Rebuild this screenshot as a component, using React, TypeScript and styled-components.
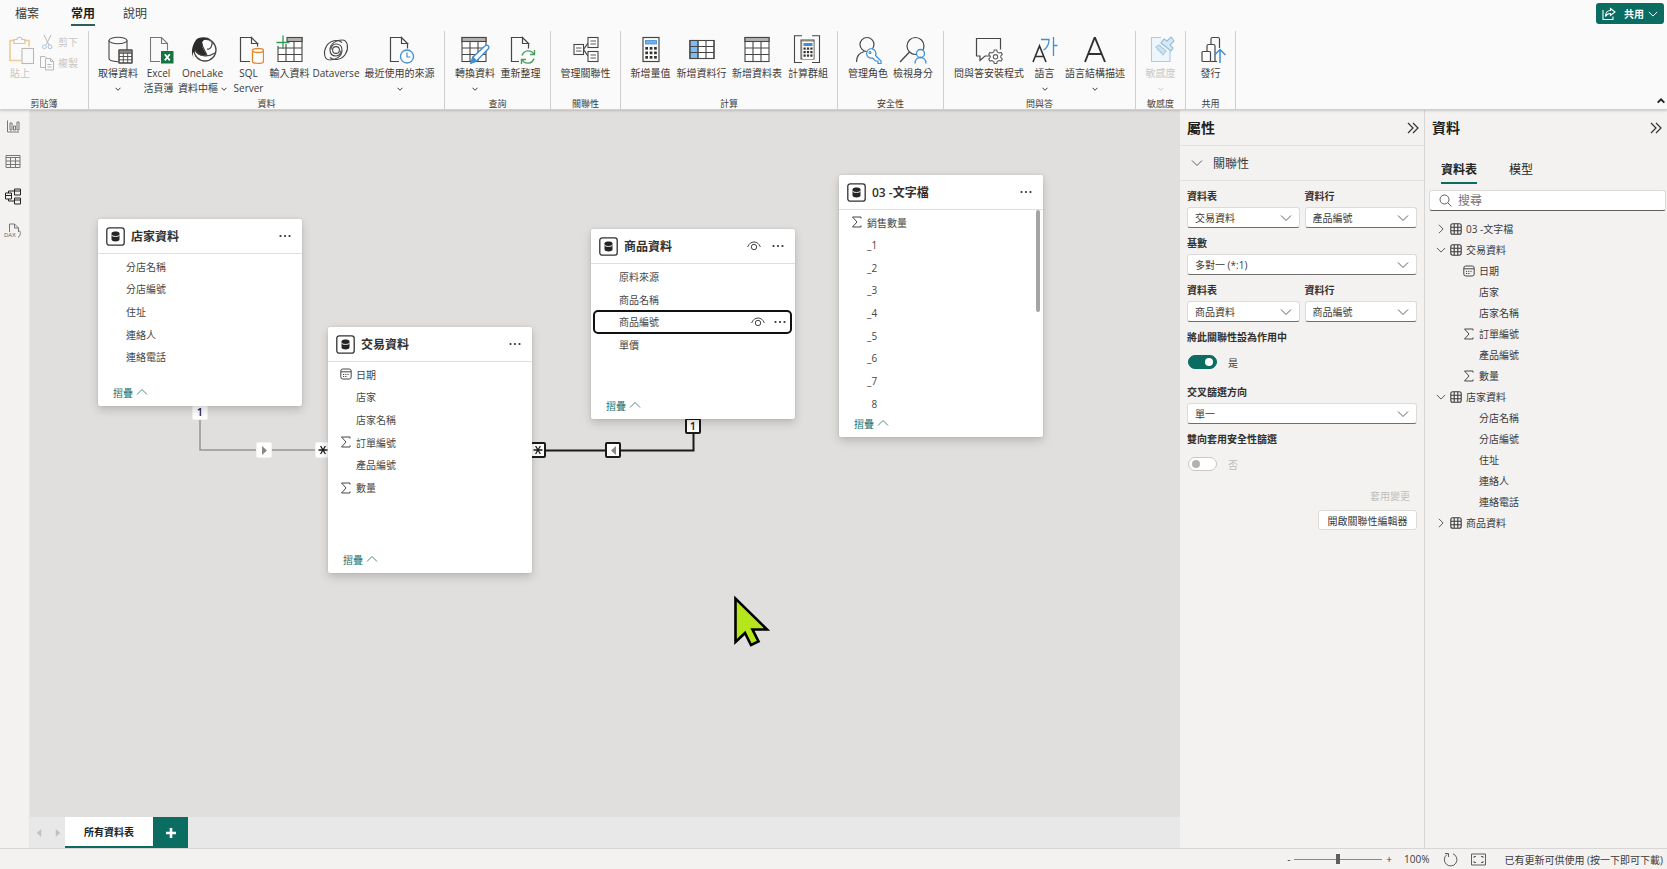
import React from "react";
import styled, { createGlobalStyle, css } from "styled-components";

const fontStack = `"Open Sans", "Noto Sans CJK TC", sans-serif`;
const teal = "#0b6c61";
const ink = "#3b3a39";
const blue = "#3f8fd2";

const GlobalStyle = createGlobalStyle`
  * { box-sizing: border-box; }
  body {
    margin: 0;
    font-family: ${fontStack};
    font-size: 10px;
    color: ${ink};
    background: #f3f2f1;
    overflow: hidden;
  }
  button, input, select { font: inherit; color: inherit; }
  button { border: 0; background: none; padding: 0; cursor: pointer; }
  ul { list-style: none; margin: 0; padding: 0; }
  h2, h3 { margin: 0; }
  svg { display: block; flex: none; }
`;

/* ---------- page frame ---------- */

const Page = styled.div`
  display: flex;
  flex-direction: column;
  height: 100vh;
`;

const Workspace = styled.div`
  flex: 1;
  display: flex;
  min-height: 0;
`;

/* ---------- ribbon ---------- */

const Ribbon = styled.header`
  background: #fafafa;
  border-bottom: 1px solid #d2d0ce;
  box-shadow: 0 1px 2px rgba(0, 0, 0, 0.16);
  z-index: 2;
`;

const TabBar = styled.nav`
  display: flex;
  height: 31px;
  padding-right: 3px;
`;

const RibbonTab = styled.button<{ $active?: boolean; $file?: boolean }>`
  height: 26px;
  padding: ${(p) => (p.$file ? "0 18px 0 15px" : "0 14px")};
  font-size: 12px;
  font-weight: ${(p) => (p.$active ? 700 : 400)};
  color: ${(p) => (p.$active ? "#201f1e" : ink)};

  span {
    display: block;
    height: 26px;
    line-height: 28px;
    border-bottom: 2px solid ${(p) => (p.$active ? "#2b5f5a" : "transparent")};
  }
`;

const ShareButton = styled.button`
  display: flex;
  align-items: center;
  gap: 8px;
  height: 21px;
  margin: 3px 0 0 auto;
  padding: 0 6px;
  border-radius: 3px;
  background: ${teal};
  color: #fff;
  font-weight: 600;

  svg:last-child { margin-left: -4px; }
`;

const GroupBar = styled.div`
  display: flex;
  height: 78px;
`;

const Group = styled.section<{ $w: number }>`
  display: flex;
  flex-direction: column;
  flex: none;
  width: ${(p) => p.$w}px;
  border-right: 1px solid #d2d0ce;
`;

const GroupBody = styled.div`
  display: flex;
  justify-content: center;
  flex: 1;
`;

const GroupName = styled.div`
  height: 12px;
  line-height: 14px;
  font-size: 9px;
  text-align: center;
`;

const BigButton = styled.button<{ $w: number }>`
  display: flex;
  flex-direction: column;
  align-items: center;
  width: ${(p) => p.$w}px;
  padding-top: 4px;
  line-height: 15px;
  white-space: nowrap;

  > svg { margin-bottom: 1px; }
  &:disabled { color: #c8c6c4; }
`;

const ButtonLine = styled.span`
  display: flex;
  align-items: center;
  justify-content: center;
  gap: 3px;
  height: 15px;
`;

const SmallColumn = styled.div`
  display: flex;
  flex-direction: column;
  padding: 0 6px 0 3px;
`;

const SmallButton = styled.button`
  display: flex;
  align-items: center;
  gap: 3px;
  height: 21px;

  &:disabled { color: #c8c6c4; }
`;

const CollapseRibbon = styled.button`
  align-self: flex-end;
  margin: 0 2px 4px auto;
`;

/* ---------- left rail ---------- */

const Rail = styled.nav`
  display: flex;
  flex-direction: column;
  align-items: center;
  gap: 17px;
  width: 30px;
  padding: 7px 4px 0 0;
  border-right: 1px solid #e6e5e4;
`;

/* ---------- model canvas ---------- */

const CanvasColumn = styled.main`
  flex: 1;
  display: flex;
  flex-direction: column;
  min-width: 0;
`;

const Canvas = styled.div`
  position: relative;
  flex: 1;
  background: #e0dfde;
  overflow: hidden;
`;

const TableNode = styled.article<{ $x: number; $y: number; $h: number }>`
  position: absolute;
  left: ${(p) => p.$x}px;
  top: ${(p) => p.$y}px;
  display: flex;
  flex-direction: column;
  width: 204px;
  height: ${(p) => p.$h}px;
  background: #fff;
  border-radius: 2px;
  box-shadow: 0 4px 10px rgba(0, 0, 0, 0.17), 0 0 3px rgba(0, 0, 0, 0.1);
`;

const NodeHeader = styled.header`
  display: flex;
  align-items: center;
  gap: 6px;
  height: 35px;
  padding: 0 11px 0 8px;
  border-bottom: 1px solid #e1dfdd;
`;

const NodeTitle = styled.h3`
  flex: 1;
  padding-top: 1px;
  font-size: 12px;
  font-weight: 600;
  line-height: 18px;
  color: #323130;
`;

const IconButton = styled.button`
  display: flex;
  margin-left: 5px;
`;

const FieldClip = styled.div<{ $h?: number }>`
  display: flex;
  justify-content: space-between;
  ${(p) => p.$h && css`height: ${p.$h}px;`}
  overflow: ${(p) => (p.$h ? "hidden" : "visible")};
`;

const FieldList = styled.ul<{ $h: number }>`
  flex: 1;
  display: grid;
  grid-auto-rows: 1fr;
  height: ${(p) => p.$h}px;
  margin: 1px 4px 0 3px;
`;

const FieldRow = styled.li<{ $selected?: boolean }>`
  display: flex;
  align-items: center;
  gap: 4px;
  padding: 0 5px 0 9px;
  color: #484644;
  border-radius: 4px;
  ${(p) => p.$selected && css`outline: 2px solid #111; outline-offset: -1px;`}
`;

const FieldName = styled.span`
  flex: 1;
`;

const IconSlot = styled.span`
  width: 12px;
`;

const ScrollThumb = styled.div`
  width: 4px;
  height: 102px;
  margin-right: 3px;
  border-radius: 2px;
  background: #a6a5a4;
`;

const CollapseButton = styled.button`
  display: flex;
  align-items: center;
  gap: 3px;
  height: 28px;
  margin-top: auto;
  padding-left: 15px;
  color: #22706c;
`;

const Wires = styled.svg`
  position: absolute;
  left: 0;
  top: 0;
`;

const Badge = styled.span<{ $x: number; $y: number; $active?: boolean }>`
  position: absolute;
  left: ${(p) => p.$x}px;
  top: ${(p) => p.$y}px;
  display: flex;
  align-items: center;
  justify-content: center;
  width: 16px;
  height: 16px;
  background: #fff;
  border: ${(p) => (p.$active ? "2px solid #1b1a19" : "1px solid #f3f2f1")};
  border-radius: 2px;
  font-size: 11px;
  font-weight: 600;
  line-height: 12px;
  color: #252423;
`;

const Pointer = styled.svg`
  position: absolute;
  left: 702px;
  top: 484px;
`;

const SheetBar = styled.div`
  display: flex;
  height: 31px;
  background: #e9e8e8;
`;

const SheetArrows = styled.div`
  display: flex;
  align-items: center;
  gap: 11px;
  padding: 0 3px 0 5px;
`;

const SheetTab = styled.button`
  width: 88px;
  background: #fff;
  border-bottom: 2px solid ${teal};
  font-weight: 600;
  color: #201f1e;
`;

const AddSheet = styled.button`
  display: flex;
  align-items: center;
  justify-content: center;
  width: 35px;
  background: ${teal};
`;

/* ---------- side panels ---------- */

const Panel = styled.aside<{ $w: number; $line?: boolean }>`
  width: ${(p) => p.$w}px;
  background: #f3f2f1;
  ${(p) => p.$line && css`border-left: 1px solid #d8d6d4;`}
`;

const PanelHeader = styled.header<{ $line?: boolean }>`
  display: flex;
  align-items: center;
  justify-content: space-between;
  height: 36px;
  padding: 0 5px 0 7px;
  border-bottom: 1px solid ${(p) => (p.$line ? "#e1dfdd" : "transparent")};
`;

const PanelTitle = styled.h2`
  font-size: 14px;
  font-weight: 700;
  line-height: 20px;
  color: #201f1e;
`;

const SectionToggle = styled.button`
  display: flex;
  align-items: center;
  gap: 10px;
  width: 100%;
  height: 35px;
  padding-left: 11px;
  border-bottom: 1px solid #e1dfdd;
  font-size: 12px;
`;

const Form = styled.form`
  display: flex;
  flex-direction: column;
  gap: 8px;
  padding: 8px 7px 0;
`;

const Pair = styled.div`
  display: grid;
  grid-template-columns: 1fr 1fr;
  gap: 5px;
`;

const Label = styled.label`
  display: block;
  height: 14px;
  line-height: 14px;
  font-weight: 600;
  color: #323130;
`;

const SelectWrap = styled.div`
  display: grid;
  align-items: center;
  margin-top: 4px;

  select, svg { grid-area: 1 / 1; }
  svg { justify-self: end; margin-right: 8px; pointer-events: none; }
`;

const Select = styled.select`
  appearance: none;
  width: 100%;
  height: 21px;
  padding: 0 20px 0 7px;
  background: #fff;
  border: 1px solid #dddbd9;
  border-bottom-color: #706e6c;
  border-radius: 3px;
`;

const SwitchField = styled.div`
  padding-bottom: 8px;
`;

const SwitchRow = styled.label<{ $off?: boolean }>`
  display: flex;
  align-items: center;
  gap: 11px;
  height: 14px;
  margin: 11px 0 0 1px;
  color: ${(p) => (p.$off ? "#bdbbb9" : ink)};
`;

const Switch = styled.input`
  appearance: none;
  display: flex;
  align-items: center;
  width: 29px;
  height: 14px;
  margin: 0;
  padding: 0 3px;
  background: #fff;
  border: 1px solid #c8c6c4;
  border-radius: 7px;

  &::before {
    content: "";
    width: 8px;
    height: 8px;
    border-radius: 4px;
    background: #b3b1af;
  }
  &:checked { justify-content: flex-end; background: ${teal}; border-color: ${teal}; }
  &:checked::before { background: #fff; }
`;

const FormActions = styled.div`
  display: flex;
  flex-direction: column;
  align-items: flex-end;
  gap: 6px;
`;

const ApplyButton = styled.button`
  height: 17px;
  padding: 0 7px;

  &:disabled { color: #c1bfbd; }
`;

const OutlineButton = styled.button`
  width: 99px;
  height: 20px;
  background: #fff;
  border: 1px solid #dddbd9;
  border-radius: 3px;
`;

const PanelTabs = styled.nav`
  display: flex;
  gap: 32px;
  padding: 12px 0 0 16px;
`;

const PanelTab = styled.button<{ $active?: boolean }>`
  height: 26px;
  padding-bottom: 1px;
  border-bottom: 2px solid ${(p) => (p.$active ? teal : "transparent")};
  font-size: 12px;
  line-height: 18px;
  font-weight: ${(p) => (p.$active ? 700 : 400)};
  color: #252423;
`;

const SearchBox = styled.label`
  display: flex;
  align-items: center;
  gap: 6px;
  height: 21px;
  margin: 6px 1px 7px 4px;
  padding-left: 9px;
  background: #fff;
  border: 1px solid #dddbd9;
  border-bottom-color: #605e5c;
  border-radius: 3px;

  input {
    flex: 1;
    min-width: 0;
    padding: 0;
    border: 0;
    outline: 0;
    background: none;
    font-size: 12px;
    line-height: 18px;
  }
  input::placeholder { color: #777573; opacity: 1; }
`;

const TreeItem = styled.button<{ $child?: boolean }>`
  display: flex;
  align-items: center;
  gap: 4px;
  width: 100%;
  height: 21px;
  padding-left: ${(p) => (p.$child ? 38 : 11)}px;
`;

/* ---------- status bar ---------- */

const StatusBar = styled.footer`
  display: flex;
  align-items: center;
  justify-content: flex-end;
  height: 21px;
  padding-right: 4px;
  border-top: 1px solid #d8d6d4;
  background: #f3f2f1;
`;

const Zoom = styled.div`
  display: flex;
  align-items: center;
  gap: 4px;
  margin-right: 12px;
  line-height: 14px;
`;

const ZoomSlider = styled.input`
  appearance: none;
  width: 88px;
  height: 12px;
  margin: 0;
  background: linear-gradient(#8a8886, #8a8886) center / 100% 1px no-repeat;

  &::-webkit-slider-thumb {
    appearance: none;
    width: 4px;
    height: 10px;
    background: #605e5c;
  }
`;

const StatusIcon = styled.button`
  margin-left: 13px;
`;

const UpdateLink = styled.a`
  margin-left: 19px;
  color: inherit;
  text-decoration: none;
`;

/* ---------- icons ---------- */

type ChevProps = { dir?: "down" | "up" | "right"; w?: number; color?: string; weight?: number };
const Chevron = ({ dir = "down", w = 12, color = "#605e5c", weight = 1 }: ChevProps) => {
  const turn = { down: 0, up: 180, right: -90 }[dir];
  return (
    <svg width={w} height={w} viewBox="0 0 12 12" fill="none" stroke={color} strokeWidth={(weight * 12) / w}>
      <path d="M1 3.5 6 8.5 11 3.5" transform={`rotate(${turn} 6 6)`} />
    </svg>
  );
};

const DoubleChevron = () => (
  <svg width="12" height="12" viewBox="0 0 12 12" fill="none" stroke="#323130" strokeWidth="1.2">
    <path d="M1 1 6 6 1 11M6 1 11 6 6 11" />
  </svg>
);

const Dots = () => (
  <svg width="12" height="4" viewBox="0 0 12 4" fill="#323130">
    <circle cx="1.5" cy="2" r="1.1" /><circle cx="6" cy="2" r="1.1" /><circle cx="10.5" cy="2" r="1.1" />
  </svg>
);

const Eye = () => (
  <svg width="14" height="10" viewBox="0 0 14 10" fill="none" stroke="#484644" strokeWidth="1">
    <path d="M.6 6C2 2.600 4.300 1 7 1s5 1.600 6.400 5" /><circle cx="7" cy="6" r="2.700" />
  </svg>
);

const DbIcon = () => (
  <svg width="19" height="19" viewBox="0 0 19 19">
    <rect x=".8" y=".8" width="17.400" height="17.400" rx="2.500" fill="#fff" stroke="#323130" strokeWidth="1.300" />
    <path d="M5.500 6.500c0-2.600 8-2.600 8 0v6c0 2.600-8 2.600-8 0z" fill="#252423" />
    <path d="M5.500 8.200c1 1.700 7 1.700 8 0" fill="none" stroke="#fff" strokeWidth=".9" />
  </svg>
);

const Sigma = () => (
  <svg width="12" height="12" viewBox="0 0 12 12" fill="none" stroke="#484644" strokeWidth="1">
    <path d="M10 2.500V1H1.500L6 6 1.500 11H10V9.500" />
  </svg>
);

const Calendar = () => (
  <svg width="12" height="12" viewBox="0 0 12 12" fill="none" stroke="#484644" strokeWidth="1">
    <rect x=".8" y="1" width="10.400" height="10" rx="2" />
    <path d="M1 3.800h10" /><path d="M3 6.400h6.500M3 8.500h4.500" strokeDasharray="1.200 1" />
  </svg>
);

const GridIcon = () => (
  <svg width="12" height="12" viewBox="0 0 12 12" fill="none" stroke="#3b3a39" strokeWidth="1.100">
    <rect x=".8" y=".8" width="10.400" height="10.400" rx="2" />
    <path d="M4.200 1v10M7.800 1v10M1 4.200h10M1 7.800h10" />
  </svg>
);

const kindIcons = { sum: <Sigma />, date: <Calendar /> };

const Frame = ({ children }: { children: React.ReactNode }) => (
  <svg width="30" height="30" viewBox="0 0 30 30" fill="none" stroke="#484644" strokeWidth="1.100">{children}</svg>
);

const Grid = ({ x = 3, w = 24 }: { x?: number; w?: number }) => (
  <>
    <rect x={x} y="2.500" width={w} height="24" fill="#fff" />
    <rect x={x} y="2.500" width={w} height="4" fill="#b5b3b1" />
    <path d={`M${x} 13h${w}M${x} 19.500h${w}M${x + 8} 6.500v20M${x + 16} 6.500v20`} />
  </>
);

const Keys = ({ xs, ys, s }: { xs: number[]; ys: number[]; s: number }) => (
  <g fill="#323130" stroke="none">
    {ys.map((y) => xs.map((x) => <rect key={`${x}-${y}`} x={x} y={y} width={s} height={s} />))}
  </g>
);

const swirl = "M21 7.500C17 4 9 5 5.500 11C2 17 3 25 9 25C14 25 21 22 21 15C21 11 18.500 9 15 9C12 9 10 11.500 10 14.500";

const icons = {
  paste: (
    <Frame>
      <g stroke="#f0cb98" strokeWidth="1.600"><path d="M16 25.500H5v-20h5M19 5.500h5v6" /></g>
      <path d="M9 8.500v-4h3c0-3 5-3 5 0h3v4z" stroke="#c8c6c4" />
      <rect x="17" y="13.500" width="11.500" height="15" fill="#fafafa" stroke="#bbb9b7" />
    </Frame>
  ),
  getData: (
    <Frame>
      <ellipse cx="15" cy="5.500" rx="9" ry="3.200" />
      <path d="M6 5.500v18c0 1.800 4 3 9 3.200M24 5.500V15" />
      <rect x="16" y="15" width="13" height="13" fill="#fff" />
      <rect x="16" y="15" width="13" height="3" fill="#8a8886" stroke="none" />
      <path d="M16 15h13v13H16zM16 18.300h13M16 21.500h13M16 24.800h13M20.300 18v10M24.700 18v10" strokeWidth=".9" />
    </Frame>
  ),
  excel: (
    <Frame>
      <path d="M16 26.500H6.500v-24h11l6 6v7M17.500 2.500v6h6" stroke="#797775" />
      <rect x="17" y="16" width="12.500" height="12.500" fill="#15743f" stroke="none" />
      <path d="m20.800 19.200 5 6.200M25.800 19.200l-5 6.200" stroke="#fff" strokeWidth="1.800" />
    </Frame>
  ),
  onelake: (
    <Frame>
      <circle cx="17" cy="15" r="11" fill="#fff" strokeWidth="1.300" />
      <path d="M8 5c2-3 11-4 15 0-5-2-9 0-9 4 0 5 3 7 5 11-5 2-10 0-12-4-3 1-2 5-1 7C3 19 3 12 8 5z" fill="#2b2a29" stroke="none" />
      <path d="M14 8c0 6 4 8 5 13M7 15c4 6 12 8 20 3M19 14c3 1 6-3 5-8" strokeWidth="1.300" />
    </Frame>
  ),
  sql: (
    <Frame>
      <path d="M16 26.500H6.500v-24h11l6 6v3M17.500 2.500v6h6z" strokeWidth="1.200" />
      <g stroke="#e8852b" strokeWidth="1.300">
        <path d="M18.500 15.500v11c0 2.500 11 2.500 11 0v-11" fill="#fff" />
        <ellipse cx="24" cy="15.500" rx="5.500" ry="2" fill="#fff" />
      </g>
    </Frame>
  ),
  enter: (
    <Frame>
      <path d="M3 11v15.500h24v-24H12" fill="#fff" />
      <rect x="12" y="2.500" width="15" height="4" fill="#b5b3b1" />
      <path d="M3 13h24M3 19.500h24M11 9v17.500M19 6.500v20" />
      <path d="M8 .5v13.500M1.500 7.500h13" stroke="#2e9b57" strokeWidth="1.300" />
    </Frame>
  ),
  dataverse: (
    <Frame>
      <path d={swirl} />
      <path d={swirl} transform="rotate(180 15 15)" />
      <circle cx="15" cy="15" r="3.400" />
    </Frame>
  ),
  recent: (
    <Frame>
      <path d="M14 26.500H5.500v-24h11l6 6v5M16.500 2.500v6h6z" strokeWidth="1.200" />
      <circle cx="22" cy="21.500" r="6.500" fill="#fff" stroke={blue} strokeWidth="1.300" />
      <path d="M22 17.500v4.500h3.500" stroke={blue} strokeWidth="1.200" />
    </Frame>
  ),
  transform: (
    <Frame>
      <Grid x={2} />
      <path d="m11 28 2-6L25.500 10.500c2.500-1 4 1 3 3L16.500 26z" fill="#fff" stroke={blue} strokeWidth="1.400" />
      <path d="m11 28 2-6 3.500 4z" fill={blue} stroke={blue} />
    </Frame>
  ),
  refresh: (
    <Frame>
      <path d="M13 26.500H5.500v-24h11l6 6v5M16.500 2.500v6h6z" strokeWidth="1.200" />
      <g stroke="#4a9e63" strokeWidth="1.400">
        <path d="M16 20.500c2-6 9.500-6 12-1M28.500 15v4.500H24M28 23.500c-2 6-9.500 6-12 1M15.500 29v-4.500H20" />
      </g>
    </Frame>
  ),
  relation: (
    <Frame>
      <path d="M12.500 14.500 17 8M12.500 14.500 17 21" strokeWidth="1.300" />
      <g fill="#fff"><rect x="3" y="9.500" width="9.500" height="10" /><rect x="17" y="2.500" width="10" height="10" /><rect x="17" y="16.500" width="10" height="10" /></g>
      <path d="M5 13h5.500M5 16h5.500M19.500 6h5.500M19.500 9h5.500M19.500 20h5.500M19.500 23h5.500" strokeWidth=".9" />
    </Frame>
  ),
  measure: (
    <Frame>
      <rect x="7" y="2.500" width="16" height="24" fill="#fff" strokeWidth="1.200" />
      <rect x="9.500" y="5.500" width="11" height="3.500" fill="#6fb0ea" stroke={blue} strokeWidth=".8" />
      <Keys xs={[9.3, 13.7, 18.1]} ys={[12, 16.500, 21]} s={2.700} />
    </Frame>
  ),
  column: (
    <Frame>
      <rect x="3" y="5.500" width="24" height="18" fill="#fff" />
      <rect x="3" y="5.500" width="8" height="18" fill="#7dbbf0" stroke="#3a78ab" />
      <path d="M3 11.500h24M3 17.500h24M11 5.500v18M19 5.500v18M3 5.500h24v18H3z" />
    </Frame>
  ),
  table: <Frame><Grid /></Frame>,
  calcGroup: (
    <Frame>
      <path d="M9 .8H1.500v26.700H9M19 .8h7.500v26.700H19" />
      <rect x="8" y="5" width="13" height="19" fill="#c8c6c4" strokeWidth="1" />
      <rect x="9.500" y="7" width="11" height="17" fill="#fff" stroke="none" />
      <rect x="10.500" y="8" width="9" height="3" fill="#3f8fd2" stroke="none" />
      <Keys xs={[10.500, 13.900, 17.300]} ys={[12.500, 16, 19.500]} s={2.200} />
    </Frame>
  ),
  roles: (
    <Frame>
      <circle cx="14" cy="9.500" r="7" strokeWidth="1.200" />
      <path d="M3.500 27c0-6 3.500-9.500 8-10.500" strokeWidth="1.200" />
      <path d="M22.500 20.500 28 26v2.500h-3V26h-2.500l-3-3A4.700 4.700 0 1 1 22.500 20.500z" fill="#fff" stroke={blue} strokeWidth="1.200" />
      <circle cx="17" cy="17.500" r="1" stroke={blue} />
    </Frame>
  ),
  viewAs: (
    <Frame>
      <circle cx="17.500" cy="11" r="8.500" strokeWidth="1.200" />
      <path d="M11.500 17 2 27" strokeWidth="1.400" />
      <circle cx="22.500" cy="18.500" r="4" fill="#fafafa" stroke={blue} strokeWidth="1.300" />
      <path d="M17 28.500c0-8 11-8 11 0" stroke={blue} strokeWidth="1.300" />
    </Frame>
  ),
  qna: (
    <Frame>
      <path d="M16 21h-5l-5 4.500V21H2.500V3.500h24v11" strokeWidth="1.200" />
      <path d="m20.300 15 2.400 0 .5 2 1.900 1 2-.6 1.200 2-1.500 1.500v1.700l1.500 1.500-1.200 2-2-.6-1.900 1-.5 2h-2.400l-.5-2-1.900-1-2 .6-1.200-2 1.500-1.500v-1.700l-1.500-1.500 1.200-2 2 .6 1.900-1z" fill="#fff" stroke="#605e5c" />
      <circle cx="21.500" cy="21.800" r="2.200" stroke="#605e5c" />
    </Frame>
  ),
  language: (
    <Frame>
      <path d="M3 27 9.500 11 16 27M5.500 21.500h8" stroke="#323130" strokeWidth="1.600" />
      <g stroke={blue} strokeWidth="1.300"><path d="M11 4.500h8c0 5-2 8.500-5.500 10.500M23.500 2v19M23.500 10.500h4" /></g>
    </Frame>
  ),
  schema: (
    <Frame>
      <path d="M5 27 14.500 3h.6L25 27M8.500 19h13" stroke="#323130" strokeWidth="1.900" />
    </Frame>
  ),
  sensitivity: (
    <Frame>
      <g stroke="#a9cbe4">
        <path d="M15 2.500H5.500v24H24V16" fill="#eef6fc" />
        <path d="m10 12 3-2 7 6-3 4zM11 14l5 4" fill="#cfe3f2" />
        <path d="m15 8 10 8 2-3-3-3 4-4-3-4-4 4-3-2z" fill="#d6e8f5" stroke="#93bcd9" />
      </g>
    </Frame>
  ),
  publish: (
    <Frame>
      <path d="M15 9.500V4c0-1 .5-1.500 1.500-1.500H22c1 0 1.500.5 1.500 1.500v9M11 16v-5c0-1 .5-1.500 1.500-1.500h5c1 0 1.500.5 1.500 1.500v15.500" strokeWidth="1.200" />
      <rect x="6" y="16.500" width="8.500" height="10" rx="1" strokeWidth="1.200" /><path d="M14.500 26.500H21" />
      <path d="M24 28V14.500M18.500 20l5.500-5.500 5.500 5.500" stroke={blue} strokeWidth="1.500" />
    </Frame>
  ),
};

const CutIcon = () => (
  <svg width="16" height="16" viewBox="0 0 16 16" fill="none" stroke="#b9b7b5">
    <path d="M5 1l5 10M12 1 7 11" /><circle cx="5.500" cy="12.800" r="1.900" stroke="#a5c6df" /><circle cx="11" cy="12.800" r="1.900" stroke="#a5c6df" />
  </svg>
);

const CopyIcon = () => (
  <svg width="16" height="16" viewBox="0 0 16 16" fill="none" stroke="#b9b7b5">
    <path d="M6 12.500H1.500v-11H6l2 2" /><path d="M6.500 3.500h5l3 3v8.500h-8zM11.500 3.500v3h3M8.500 9.500h4M8.500 12h4" fill="#fafafa" />
  </svg>
);

const ShareIcon = () => (
  <svg width="14" height="14" viewBox="0 0 14 14" fill="none" stroke="#fff" strokeWidth="1.100">
    <path d="M1 3v9.500h10V9.500M8.500 1.500 13 5 8.500 8.500v-2C6 6.500 4.500 7.500 3.500 9.500c0-3.500 2-6 5-6z" />
  </svg>
);

const SearchIcon = () => (
  <svg width="13" height="13" viewBox="0 0 13 13" fill="none" stroke="#605e5c" strokeWidth="1">
    <circle cx="5.500" cy="5.500" r="4.500" /><path d="m8.800 8.800 3.700 3.700" />
  </svg>
);

const Star = () => (
  <svg width="10" height="10" viewBox="0 0 10 10" stroke="#1b1a19" strokeWidth="1.300">
    <path d="M.5 5h9M2.600 1l4.800 8M7.400 1 2.600 9" />
  </svg>
);

const Triangle = ({ left, color = "#8a8886", size = 9 }: { left?: boolean; color?: string; size?: number }) => (
  <svg width={size} height={size} viewBox="0 0 9 9" fill={color}>
    <path d={left ? "M7 0v9L2 4.500z" : "M2 0v9l5-4.500z"} />
  </svg>
);

const railIcons = [
  { name: "報表檢視", art: <path d="M4.500 5v11.500H16M7 14.500v-7h2v7zM10.500 14.500v-4h2v4zM14 14.500v-8h2v8z" />, color: "#797775" },
  { name: "資料表檢視", art: <path d="M3 5h14v12H3zM3 7h14M3 10.500h14M3 14h14M7.500 7v10M12.500 7v10" />, color: "#797775" },
  { name: "模型檢視", art: <path d="M2.500 7.500h6v6h-6zM2.500 10h6M11.500 3.500h6v6h-6zM11.500 5.500h6M11.500 12.500h6v6h-6zM11.500 14.500h6M5.500 7.500v-2h6M5.500 13.500v2h6" />, color: "#252423" },
];

/* ---------- data ---------- */

type Command = { w: number; icon: React.ReactNode; label: string; second?: string; menu?: boolean; disabled?: boolean };
type RibbonGroup = { name: string; w: number; commands: Command[] };

const ribbonGroups: RibbonGroup[] = [
  {
    name: "資料", w: 356, commands: [
      { w: 45, icon: icons.getData, label: "取得資料", menu: true },
      { w: 36, icon: icons.excel, label: "Excel", second: "活頁簿" },
      { w: 52, icon: icons.onelake, label: "OneLake", second: "資料中樞", menu: true },
      { w: 40, icon: icons.sql, label: "SQL", second: "Server" },
      { w: 42, icon: icons.enter, label: "輸入資料" },
      { w: 51, icon: icons.dataverse, label: "Dataverse" },
      { w: 76, icon: icons.recent, label: "最近使用的來源", menu: true },
    ],
  },
  {
    name: "查詢", w: 106, commands: [
      { w: 46, icon: icons.transform, label: "轉換資料", menu: true },
      { w: 45, icon: icons.refresh, label: "重新整理" },
    ],
  },
  { name: "關聯性", w: 70, commands: [{ w: 52, icon: icons.relation, label: "管理關聯性" }] },
  {
    name: "計算", w: 217, commands: [
      { w: 47, icon: icons.measure, label: "新增量值" },
      { w: 55, icon: icons.column, label: "新增資料行" },
      { w: 56, icon: icons.table, label: "新增資料表" },
      { w: 46, icon: icons.calcGroup, label: "計算群組" },
    ],
  },
  {
    name: "安全性", w: 106, commands: [
      { w: 45, icon: icons.roles, label: "管理角色" },
      { w: 45, icon: icons.viewAs, label: "檢視身分" },
    ],
  },
  {
    name: "問與答", w: 192, commands: [
      { w: 79, icon: icons.qna, label: "問與答安裝程式" },
      { w: 32, icon: icons.language, label: "語言", menu: true },
      { w: 69, icon: icons.schema, label: "語言結構描述", menu: true },
    ],
  },
  { name: "敏感度", w: 50, commands: [{ w: 40, icon: icons.sensitivity, label: "敏感度", menu: true, disabled: true }] },
  { name: "共用", w: 50, commands: [{ w: 40, icon: icons.publish, label: "發行" }] },
];

type Field = { name: string; kind?: "sum" | "date"; selected?: boolean };
const f = (name: string, kind?: "sum" | "date"): Field => ({ name, kind });

const storeFields = [f("分店名稱"), f("分店編號"), f("住址"), f("連絡人"), f("連絡電話")];
const saleFields = [f("日期", "date"), f("店家"), f("店家名稱"), f("訂單編號", "sum"), f("產品編號"), f("數量", "sum")];
const productFields: Field[] = [f("原料來源"), f("商品名稱"), { name: "商品編號", selected: true }, f("單價")];
const textFields = [f("銷售數量", "sum"), ...[1, 2, 3, 4, 5, 6, 7, 8].map((n) => f(`_${n}`))];

const nodes = [
  { title: "店家資料", x: 68, y: 109, h: 187, list: 113, fields: storeFields },
  { title: "交易資料", x: 298, y: 217, h: 246, list: 136, fields: saleFields },
  { title: "商品資料", x: 561, y: 119, h: 190, list: 91, fields: productFields, eye: true },
  { title: "03 -文字檔", x: 809, y: 65, h: 262, list: 204, fields: textFields, clip: 199 },
];

const tree: { name: string; fields?: Field[] }[] = [
  { name: "03 -文字檔" },
  { name: "交易資料", fields: saleFields },
  { name: "店家資料", fields: storeFields },
  { name: "商品資料" },
];

/* ---------- components ---------- */

const CommandButton = ({ w, icon, label, second, menu, disabled }: Command) => (
  <BigButton $w={w} disabled={disabled}>
    {icon}
    <ButtonLine>{label}</ButtonLine>
    <ButtonLine>
      {second}
      {menu && <Chevron w={6} color={disabled ? "#c8c6c4" : ink} weight={1} />}
    </ButtonLine>
  </BigButton>
);

const SelectField = ({ id, label, value }: { id: string; label: string; value: string }) => (
  <div>
    <Label htmlFor={id}>{label}</Label>
    <SelectWrap>
      <Select id={id} defaultValue={value}><option>{value}</option></Select>
      <Chevron />
    </SelectWrap>
  </div>
);

const ModelTable = ({ node }: { node: (typeof nodes)[number] }) => (
  <TableNode $x={node.x} $y={node.y} $h={node.h}>
    <NodeHeader>
      <DbIcon />
      <NodeTitle>{node.title}</NodeTitle>
      {node.eye && <IconButton aria-label="隱藏"><Eye /></IconButton>}
      <IconButton aria-label="更多選項"><Dots /></IconButton>
    </NodeHeader>
    <FieldClip $h={node.clip}>
      <FieldList $h={node.list}>
        {node.fields.map((field) => (
          <FieldRow key={field.name} $selected={field.selected}>
            <IconSlot>{field.kind && kindIcons[field.kind]}</IconSlot>
            <FieldName>{field.name}</FieldName>
            {field.selected && (
              <>
                <IconButton aria-label="隱藏"><Eye /></IconButton>
                <IconButton aria-label="更多選項"><Dots /></IconButton>
              </>
            )}
          </FieldRow>
        ))}
      </FieldList>
      {node.clip && <ScrollThumb />}
    </FieldClip>
    <CollapseButton>摺疊<Chevron dir="up" color="#4d8a87" /></CollapseButton>
  </TableNode>
);

export default function App() {
  return (
    <Page>
      <GlobalStyle />
      <Ribbon>
        <TabBar>
          <RibbonTab $file><span>檔案</span></RibbonTab>
          <RibbonTab $active><span>常用</span></RibbonTab>
          <RibbonTab><span>說明</span></RibbonTab>
          <ShareButton><ShareIcon />共用<Chevron w={10} color="#fff" /></ShareButton>
        </TabBar>
        <GroupBar>
          <Group $w={89}>
            <GroupBody>
              <BigButton $w={32} disabled>{icons.paste}<ButtonLine>貼上</ButtonLine></BigButton>
              <SmallColumn>
                <SmallButton disabled><CutIcon />剪下</SmallButton>
                <SmallButton disabled><CopyIcon />複製</SmallButton>
              </SmallColumn>
            </GroupBody>
            <GroupName>剪貼簿</GroupName>
          </Group>
          {ribbonGroups.map((group) => (
            <Group key={group.name} $w={group.w}>
              <GroupBody>
                {group.commands.map((c) => <CommandButton key={c.label} {...c} />)}
              </GroupBody>
              <GroupName>{group.name}</GroupName>
            </Group>
          ))}
          <CollapseRibbon aria-label="摺疊功能區"><Chevron dir="up" w={8} color="#252423" weight={2} /></CollapseRibbon>
        </GroupBar>
      </Ribbon>

      <Workspace>
        <Rail>
          {railIcons.map((r) => (
            <button key={r.name} aria-label={r.name}>
              <svg width="20" height="18" viewBox="0 1.500 20 18" fill="none" stroke={r.color}>{r.art}</svg>
            </button>
          ))}
          <button aria-label="DAX 查詢檢視">
            <svg width="20" height="18" viewBox="0 0 20 18" fill="none" stroke="#797775">
              <path d="M6.500 10V2h5l4 4v4M11.500 2v4h4M16 8.500c2 1 2 5-1 7" />
              <text x="1" y="15" fontSize="6" fill="#605e5c" stroke="none">DAX</text>
            </svg>
          </button>
        </Rail>

        <CanvasColumn>
          <Canvas>
            <Wires width="700" height="400" viewBox="0 0 700 400" fill="none">
              <path d="M170 296v44h128" stroke="#979593" strokeWidth="1.500" />
              <path d="M502 340.500h161.500V309" stroke="#1b1a19" strokeWidth="2" />
            </Wires>
            <Badge $x={162} $y={294}>1</Badge>
            <Badge $x={226} $y={332}><Triangle /></Badge>
            <Badge $x={285} $y={332}><Star /></Badge>
            <Badge $x={500} $y={332} $active><Star /></Badge>
            <Badge $x={575} $y={332} $active><Triangle left /></Badge>
            <Badge $x={655} $y={308} $active>1</Badge>
            {nodes.map((node) => <ModelTable key={node.title} node={node} />)}
            <Pointer width="40" height="54" viewBox="0 0 40 54">
              <path d="M3.500 4.500v43.500l9.500-9 6 12 7.500-3.500-6-12H35z" fill="#b5e61d" stroke="#000" strokeWidth="2.600" />
            </Pointer>
          </Canvas>
          <SheetBar>
            <SheetArrows>
              <Triangle left color="#c3c1bf" size={8} />
              <Triangle color="#c3c1bf" size={8} />
            </SheetArrows>
            <SheetTab>所有資料表</SheetTab>
            <AddSheet aria-label="新增版面配置">
              <svg width="10" height="10" viewBox="0 0 10 10" stroke="#fff" strokeWidth="2.600"><path d="M5 0v10M0 5h10" /></svg>
            </AddSheet>
          </SheetBar>
        </CanvasColumn>

        <Panel $w={244}>
          <PanelHeader $line>
            <PanelTitle>屬性</PanelTitle>
            <IconButton aria-label="摺疊窗格"><DoubleChevron /></IconButton>
          </PanelHeader>
          <SectionToggle><Chevron />關聯性</SectionToggle>
          <Form>
            <Pair>
              <SelectField id="from-table" label="資料表" value="交易資料" />
              <SelectField id="from-column" label="資料行" value="產品編號" />
            </Pair>
            <SelectField id="cardinality" label="基數" value="多對一 (*:1)" />
            <Pair>
              <SelectField id="to-table" label="資料表" value="商品資料" />
              <SelectField id="to-column" label="資料行" value="商品編號" />
            </Pair>
            <SwitchField>
              <Label htmlFor="active">將此關聯性設為作用中</Label>
              <SwitchRow><Switch id="active" type="checkbox" defaultChecked />是</SwitchRow>
            </SwitchField>
            <SelectField id="direction" label="交叉篩選方向" value="單一" />
            <SwitchField>
              <Label htmlFor="security">雙向套用安全性篩選</Label>
              <SwitchRow $off><Switch id="security" type="checkbox" disabled />否</SwitchRow>
            </SwitchField>
            <FormActions>
              <ApplyButton type="button" disabled>套用變更</ApplyButton>
              <OutlineButton type="button">開啟關聯性編輯器</OutlineButton>
            </FormActions>
          </Form>
        </Panel>

        <Panel $w={243} $line>
          <PanelHeader>
            <PanelTitle>資料</PanelTitle>
            <IconButton aria-label="摺疊窗格"><DoubleChevron /></IconButton>
          </PanelHeader>
          <PanelTabs>
            <PanelTab $active>資料表</PanelTab>
            <PanelTab>模型</PanelTab>
          </PanelTabs>
          <SearchBox><SearchIcon /><input aria-label="搜尋" placeholder="搜尋" /></SearchBox>
          <ul>
            {tree.map((t) => (
              <li key={t.name}>
                <TreeItem>
                  <Chevron dir={t.fields ? "down" : "right"} w={10} />
                  <GridIcon />
                  <span>{t.name}</span>
                </TreeItem>
                {t.fields && (
                  <ul>
                    {t.fields.map((field) => (
                      <li key={field.name}>
                        <TreeItem $child>
                          <IconSlot>{field.kind && kindIcons[field.kind]}</IconSlot>
                          <span>{field.name}</span>
                        </TreeItem>
                      </li>
                    ))}
                  </ul>
                )}
              </li>
            ))}
          </ul>
        </Panel>
      </Workspace>

      <StatusBar>
        <Zoom>
          <button aria-label="縮小">-</button>
          <ZoomSlider type="range" aria-label="縮放" min="0" max="100" defaultValue="50" />
          <button aria-label="放大">+</button>
        </Zoom>
        <span>100%</span>
        <StatusIcon aria-label="重設縮放">
          <svg width="15" height="15" viewBox="0 0 15 15" fill="none" stroke="#605e5c">
            <path d="M10 1.800A6.300 6.300 0 1 1 4 2.500M2 1.500h3.500V5" />
          </svg>
        </StatusIcon>
        <StatusIcon aria-label="調整至頁面">
          <svg width="15" height="13" viewBox="0 0 15 13" fill="none" stroke="#605e5c">
            <path d="M.5 1h14v11H.5zM3 5V3.500h2M10 3.500h2V5M12 8v1.500h-2M5 9.500H3V8" />
          </svg>
        </StatusIcon>
        <UpdateLink href="#update">已有更新可供使用 (按一下即可下載)</UpdateLink>
      </StatusBar>
    </Page>
  );
}
